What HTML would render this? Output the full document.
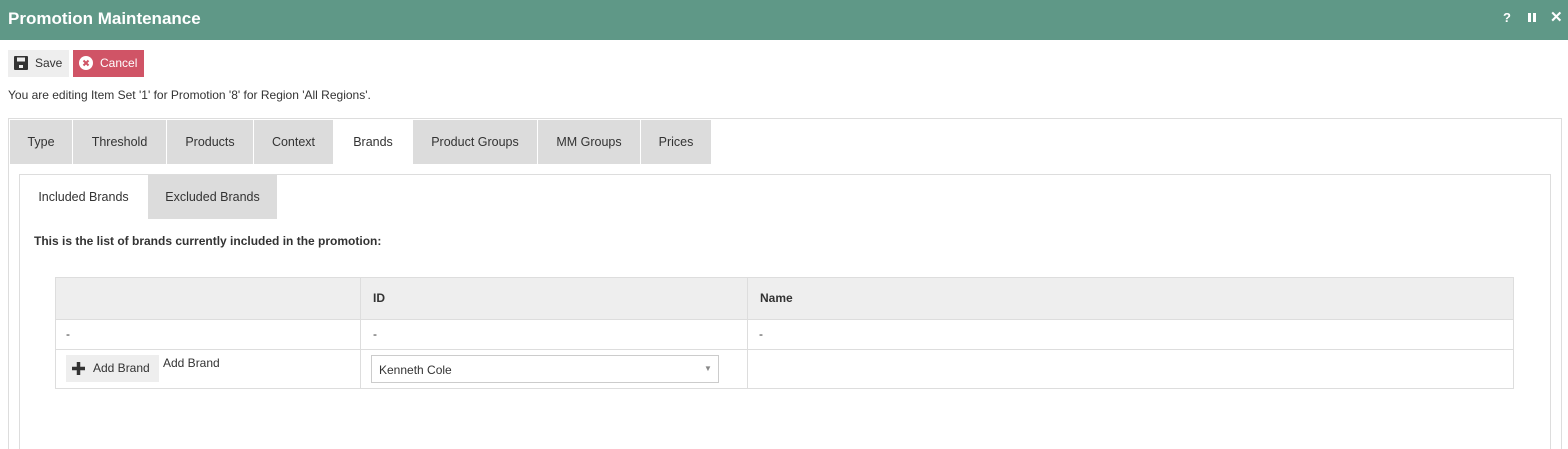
<!DOCTYPE html><html style="width:1568px;height:449px;overflow:hidden"><head><style>
body{margin:0;width:1568px;height:449px;overflow:hidden;background:#fff;font-family:"Liberation Sans",sans-serif;font-size:12px;color:#333;position:relative}
div{position:absolute;box-sizing:border-box}
.hd{left:0;top:0;width:1568px;height:40px;background:#5f9887;color:#fff;font-weight:bold;font-size:17px;line-height:38px;padding-left:8px}
.tab{top:120px;height:44px;background:#dcdcdc;line-height:44px;text-align:center;font-size:12.5px}
</style></head><body>
<div class="hd">Promotion Maintenance</div>
<div style="left:1503px;top:10px;color:#fff;font-weight:bold;font-size:13px">?</div>
<div style="left:1528px;top:13px;width:3px;height:9px;background:#fff"></div>
<div style="left:1533px;top:13px;width:3px;height:9px;background:#fff"></div>
<div style="left:1550px;top:8px;color:#fff;font-weight:bold;font-size:15px">✕</div>
<div style="left:8px;top:50px;width:61px;height:27px;background:#eee;line-height:27px;padding-left:27px">Save</div>
<svg style="position:absolute;left:14px;top:56px" width="14" height="14"><rect x="0" y="0" width="14" height="14" rx="1" fill="#333"/><rect x="3" y="1.5" width="8" height="4" fill="#eee"/><rect x="5" y="9" width="4" height="3" fill="#eee"/></svg>
<div style="left:73px;top:50px;width:71px;height:27px;background:#d05466;color:#fff;line-height:27px;padding-left:27px">Cancel</div>
<svg style="position:absolute;left:79px;top:56px" width="14" height="14"><circle cx="7" cy="7" r="7" fill="#fff"/><path d="M4.5 4.5l5 5M9.5 4.5l-5 5" stroke="#d05466" stroke-width="2"/></svg>
<div style="left:8px;top:88px">You are editing Item Set '1' for Promotion '8' for Region 'All Regions'.</div>
<div style="left:8px;top:118px;width:1554px;height:332px;border:1px solid #ddd"></div>
<div class="tab" style="left:10px;width:62px">Type</div>
<div class="tab" style="left:73px;width:93px">Threshold</div>
<div class="tab" style="left:167px;width:86px">Products</div>
<div class="tab" style="left:254px;width:79px">Context</div>
<div class="tab" style="left:334px;width:78px;background:#fff">Brands</div>
<div class="tab" style="left:413px;width:124px">Product Groups</div>
<div class="tab" style="left:538px;width:102px">MM Groups</div>
<div class="tab" style="left:641px;width:70px">Prices</div>
<div style="left:19px;top:174px;width:1532px;height:276px;border:1px solid #ddd"></div>
<div class="tab" style="left:20px;top:175px;width:127px;background:#fff">Included Brands</div>
<div class="tab" style="left:148px;top:175px;width:129px">Excluded Brands</div>
<div style="left:34px;top:234px;font-weight:bold">This is the list of brands currently included in the promotion:</div>
<div style="left:55px;top:277px;width:1459px;height:112px;border:1px solid #ddd"></div>
<div style="left:56px;top:278px;width:1457px;height:41px;background:#eee"></div>
<div style="left:56px;top:319px;width:1457px;height:1px;background:#ddd"></div>
<div style="left:56px;top:349px;width:1457px;height:1px;background:#ddd"></div>
<div style="left:360px;top:278px;width:1px;height:110px;background:#ddd"></div>
<div style="left:747px;top:278px;width:1px;height:110px;background:#ddd"></div>
<div style="left:373px;top:291px;font-weight:bold">ID</div>
<div style="left:760px;top:291px;font-weight:bold">Name</div>
<div style="left:66px;top:327px">-</div><div style="left:373px;top:327px">-</div><div style="left:759px;top:327px">-</div>
<div style="left:66px;top:355px;width:93px;height:27px;background:#eee;line-height:27px;padding-left:27px">Add Brand</div>
<svg style="position:absolute;left:72px;top:362px" width="13" height="13"><path d="M6.5 0v13M0 6.5h13" stroke="#333" stroke-width="3.5"/></svg>
<div style="left:163px;top:356px">Add Brand</div>
<div style="left:371px;top:355px;width:348px;height:28px;border:1px solid #ccc;line-height:28px;padding-left:7px">Kenneth Cole</div>
<div style="left:704px;top:364px;font-size:8px;color:#888">▼</div>
</body></html>
